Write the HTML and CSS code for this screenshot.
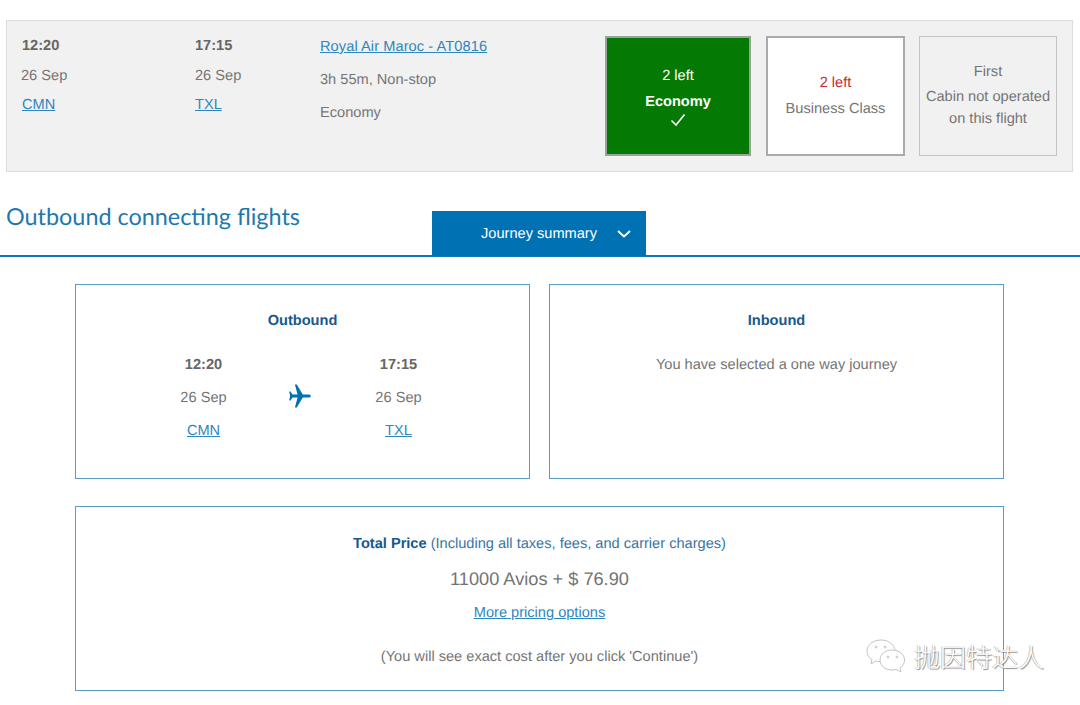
FILE: index.html
```html
<!DOCTYPE html>
<html lang="en">
<head>
<meta charset="utf-8">
<title>Journey summary</title>
<link rel="stylesheet" href="styles.css">
</head>
<body>
<div class="flight">
  <div class="col col-dep">
    <div class="time">12:20</div>
    <div class="date">26 Sep</div>
    <a class="link" href="#">CMN</a>
  </div>
  <div class="col col-arr">
    <div class="time">17:15</div>
    <div class="date">26 Sep</div>
    <a class="link" href="#">TXL</a>
  </div>
  <div class="col col-info">
    <a class="link flight-link" href="#">Royal Air Maroc - AT0816</a>
    <div class="info-line">3h 55m, Non-stop</div>
    <div class="info-line">Economy</div>
  </div>
  <div class="cabins">
    <div class="cabin cabin-selected">
      <div>2 left</div>
      <div class="cabin-name">Economy</div>
      <svg class="check" width="16" height="14" viewBox="0 0 16 14"><path d="M1.500 7.500 L6 12 L14.500 1.500" fill="none" stroke="#fff" stroke-width="1.600"/></svg>
    </div>
    <div class="cabin cabin-open">
      <div class="left-red">2 left</div>
      <div class="cabin-name-plain">Business Class</div>
    </div>
    <div class="cabin cabin-none">
      <div>First</div>
      <div class="none-note">Cabin not operated<br>on this flight</div>
    </div>
  </div>
</div>

<div class="section-head">
  <h1 class="title">Outbound connecting flights</h1>
  <div class="tab">
    <span>Journey summary</span>
    <svg width="14" height="8" viewBox="0 0 14 8"><path d="M1 1 L7 6.500 L13 1" fill="none" stroke="#fff" stroke-width="2"/></svg>
  </div>
</div>

<div class="summary">
  <div class="panel-row">
    <section class="panel panel-out">
      <h2 class="panel-title">Outbound</h2>
      <div class="route">
        <div class="stop">
          <div class="time">12:20</div>
          <div class="date">26 Sep</div>
          <a class="link" href="#">CMN</a>
        </div>
        <svg class="plane" width="22" height="24" viewBox="0 0 22 24"><path fill="#0071b2" d="M21.800 12c0-1-1-1.600-2.400-1.600h-5.600L7.800 .5H5.900l2.700 9.900H3.500L1.500 7.600H.2l.9 4.400-.9 4.400h1.300l2-2.800h5.100L5.900 23.500h1.900l6-9.900h5.600c1.400 0 2.400-.6 2.400-1.600z"/></svg>
        <div class="stop">
          <div class="time">17:15</div>
          <div class="date">26 Sep</div>
          <a class="link" href="#">TXL</a>
        </div>
      </div>
    </section>
    <section class="panel panel-in">
      <h2 class="panel-title">Inbound</h2>
      <p class="panel-text">You have selected a one way journey</p>
    </section>
  </div>
  <section class="panel panel-total">
    <div class="total-line"><strong>Total Price</strong> (Including all taxes, fees, and carrier charges)</div>
    <div class="price">11000 Avios + $ 76.90</div>
    <a class="link" href="#">More pricing options</a>
    <div class="note">(You will see exact cost after you click 'Continue')</div>
  </section>
</div>

<div class="watermark">
  <svg width="42" height="38" viewBox="0 0 42 38" fill="#fff" stroke="#c4c4c4" stroke-width="1">
    <path d="M16 2C8 2 2 7 2 13c0 4 2 6.500 5 8.500L6 26l5-3c1.500.4 3 .6 4 .6C22 24 30 19 30 13 30 7 24 2 16 2z"/>
    <path d="M27 12c-7 0-12 4.500-12 10s5 10 12 10c1.500 0 2.500-.2 4-.6l5 2.600-1-4c3-2 4.500-5 4.500-8 0-5.500-5.500-10-12.500-10z"/>
    <circle cx="11" cy="9" r="1"/><circle cx="20" cy="9" r="1"/><circle cx="23" cy="19" r="1"/><circle cx="32" cy="19" r="1"/>
  </svg>
  <span class="wm-text">抛因特达人</span>
</div>
</body>
</html>
```

FILE: styles.css
```css
* { box-sizing: border-box; }
html, body { margin: 0; padding: 0; }
body {
  position: relative;
  width: 1080px;
  height: 705px;
  overflow: hidden;
  background: #fff;
  padding-top: 20px;
  font-family: "Liberation Sans", Arial, sans-serif;
  font-size: 14.6px;
  line-height: 18px;
  color: #757575;
  text-rendering: geometricPrecision;
}
.link { color: #2f86bd; text-decoration: underline; }
.time { font-weight: 700; color: #666; }

.flight {
  display: flex;
  width: 1067px;
  height: 152px;
  margin-left: 6px;
  background: #f1f1f1;
  border: 1px solid #dcdcdc;
}
.col { display: flex; flex-direction: column; align-items: flex-start; padding-top: 16px; }
.col-dep { width: 174px; padding-left: 15px; gap: 11px; }
.col-arr { width: 139px; padding-left: 14px; gap: 11px; }
.col-dep .date, .col-arr .date { margin-top: 1px; }
.col-dep .date { margin-left: -1px; }
.col-info { width: 285px; padding-top: 17px; gap: 15px; }
.flight-link { letter-spacing: .08px; }

.cabins { display: flex; gap: 15px; padding-top: 15px; }
.cabin {
  display: flex;
  flex-direction: column;
  align-items: center;
  justify-content: center;
  height: 120px;
  text-align: center;
}
.cabin-selected { width: 146px; background: #047a04; border: 2px solid #96a596; color: #fff; gap: 8px; padding-top: 2px; }
.cabin-name { font-weight: 700; }
.check { margin-top: -6px; }
.cabin-open { width: 139px; background: #fff; border: 2px solid #aaa; gap: 8px; }
.left-red { color: #c3292e; }
.cabin-none { width: 138px; border: 1px solid #c4c4c4; gap: 5px; margin-left: -1px; }
.none-note { line-height: 22px; }

.section-head {
  display: flex;
  height: 85px;
  padding-left: 6px;
  align-items: flex-start;
  border-bottom: 2px solid #0d76b4;
}
.title {
  width: 426px;
  margin: 28px 0 0;
  font-family: "Lato", sans-serif;
  font-size: 23.4px;
  line-height: 32px;
  font-weight: 400;
  color: #1e78ad;
}
.tab {
  display: flex;
  align-items: center;
  justify-content: flex-end;
  gap: 20px;
  width: 214px;
  height: 45px;
  margin-top: 39px;
  padding: 0 15px 0 0;
  background: #0071b2;
  color: #fff;
}

.summary { display: flex; flex-direction: column; gap: 27px; margin: 27px 0 0 75px; width: 929px; }
.panel-row { display: flex; gap: 19px; }
.panel { border: 1px solid #5b9cc4; text-align: center; }
.panel-out, .panel-in { width: 455px; height: 195px; padding-top: 27px; }
.panel-title { margin: 0; font-size: 14.6px; line-height: 18px; font-weight: 700; color: #17588f; }
.panel-text { margin: 26px 0 0; }
.route { display: flex; align-items: center; justify-content: center; margin-top: 26px; margin-right: 3px; }
.stop { display: flex; flex-direction: column; align-items: center; gap: 15px; width: 100px; }
.plane { margin: 0 37.5px 4px 35.5px; }

.panel-total { display: flex; flex-direction: column; align-items: center; height: 185px; padding-top: 28px; }
.total-line { color: #3a74a3; }
.total-line strong { color: #17588f; }
.price { margin: 15px 0 14px; font-size: 18.2px; line-height: 22px; color: #737373; }
.note { margin-top: 26px; }

.watermark { position: absolute; left: 865px; top: 638px; display: flex; align-items: center; gap: 7px; }
.wm-text {
  font-family: "Noto Sans CJK SC", sans-serif;
  font-size: 26px;
  line-height: 36px;
  font-weight: 300;
  color: #fff;
  text-shadow: 1px 1px 1px #888, -1px 0 0 #c8c8c8;
}
```
